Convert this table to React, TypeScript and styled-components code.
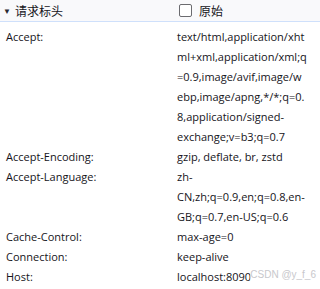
import React from "react";
import styled, { createGlobalStyle } from "styled-components";

const GlobalStyle = createGlobalStyle`
  html, body {
    margin: 0;
    padding: 0;
    background: #ffffff;
  }
  body {
    font-family: "Open Sans", "Liberation Sans", "Noto Sans CJK SC", sans-serif;
    color: #15141a;
  }
`;

const Panel = styled.div`
  position: relative;
  width: 320px;
  height: 289px;
  overflow: hidden;
  background: #ffffff;
`;

const HeaderBar = styled.div`
  display: flex;
  align-items: center;
  height: 21px;
  background: #f9f9fb;
  border-bottom: 1px solid #cfe0fb;
  font-size: 12px;
`;

const Toggle = styled.div`
  display: flex;
  align-items: center;
  gap: 4px;
  width: 176px;
  padding-left: 3px;
  box-sizing: border-box;
`;

const Arrow = styled.span`
  font-size: 8px;
  color: #2b2a33;
`;

const RawToggle = styled.label`
  display: flex;
  align-items: center;
  gap: 7px;
  padding-left: 3px;
`;

const Box = styled.span`
  width: 11px;
  height: 11px;
  border: 1px solid #6b6b6f;
  border-radius: 2px;
  background: #ffffff;
`;

const Table = styled.div`
  display: grid;
  grid-template-columns: 171px 130px;
  padding: 5px 0 0 6px;
  font-size: 11px;
  line-height: 20px;
`;

const Name = styled.div`
  white-space: nowrap;
`;

const Value = styled.div`
  overflow-wrap: anywhere;
`;

const Watermark = styled.div`
  position: absolute;
  right: 4px;
  bottom: 9px;
  font-family: "Liberation Sans", sans-serif;
  font-size: 10px;
  color: #c8c8cc;
  background: rgba(255, 255, 255, 0.6);
`;

const headers: [string, string][] = [
  [
    "Accept:",
    "text/html,application/xhtml+xml,application/xml;q=0.9,image/avif,image/webp,image/apng,*/*;q=0.8,application/signed-exchange;v=b3;q=0.7",
  ],
  ["Accept-Encoding:", "gzip, deflate, br, zstd"],
  ["Accept-Language:", "zh-CN,zh;q=0.9,en;q=0.8,en-GB;q=0.7,en-US;q=0.6"],
  ["Cache-Control:", "max-age=0"],
  ["Connection:", "keep-alive"],
  ["Host:", "localhost:8090"],
];

export default function App() {
  return (
    <Panel>
      <GlobalStyle />
      <HeaderBar>
        <Toggle>
          <Arrow>▼</Arrow>
          <span>请求标头</span>
        </Toggle>
        <RawToggle>
          <Box />
          <span>原始</span>
        </RawToggle>
      </HeaderBar>
      <Table>
        {headers.map(([k, v]) => (
          <React.Fragment key={k}>
            <Name>{k}</Name>
            <Value>{v}</Value>
          </React.Fragment>
        ))}
      </Table>
      <Watermark>CSDN @y_f_6</Watermark>
    </Panel>
  );
}
